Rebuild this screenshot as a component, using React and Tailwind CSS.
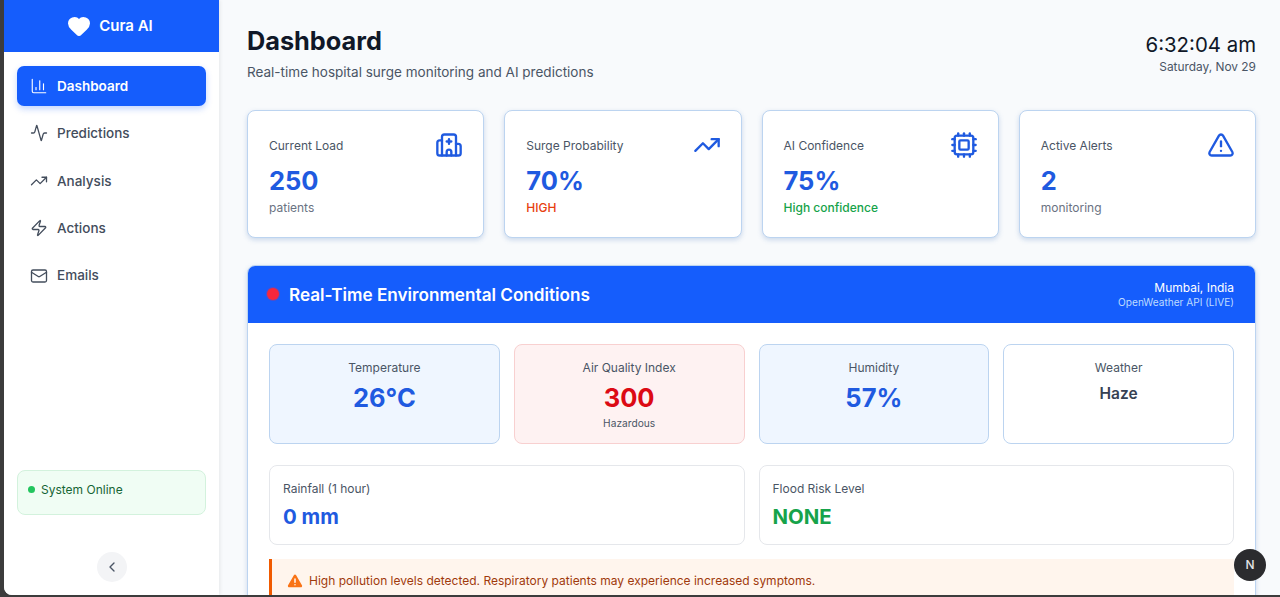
import { Activity, ChartColumn, ChevronLeft, Cpu, Heart, Hospital, Mail, TrendingUp, TriangleAlert, Zap } from "lucide-react";

const navItems = [
  { label: "Dashboard", icon: ChartColumn, active: true },
  { label: "Predictions", icon: Activity },
  { label: "Analysis", icon: TrendingUp },
  { label: "Actions", icon: Zap },
  { label: "Emails", icon: Mail },
];

const stats = [
  { label: "Current Load", value: "250", note: "patients", noteClass: "text-[#6a7282]", icon: Hospital },
  { label: "Surge Probability", value: "70%", note: "HIGH", noteClass: "text-[#e7400f] font-medium", icon: TrendingUp },
  { label: "AI Confidence", value: "75%", note: "High confidence", noteClass: "text-[#16a34a] font-medium", icon: Cpu },
  { label: "Active Alerts", value: "2", note: "monitoring", noteClass: "text-[#6a7282]", icon: TriangleAlert },
];

const StatCard = ({ stat }) => {
  const Icon = stat.icon;
  return (
    <div className="h-[128px] rounded-[8px] border border-[#bcd4f0] bg-white px-[21px] pt-[25px] shadow-[0_2px_5px_rgba(100,140,200,0.3)]">
      <div className="flex items-start justify-between">
        <div>
          <p className="text-[12px] leading-[19px] text-[#4a5565]">{stat.label}</p>
          <p className="mt-[10px] text-[25.5px] leading-[32px] font-bold text-[#1f5ae0]">{stat.value}</p>
          <p className={`mt-[2px] text-[12px] leading-[18px] ${stat.noteClass}`}>{stat.note}</p>
        </div>
        <Icon className="mt-[-5px] mr-[-1px] h-[28px] w-[28px] text-[#1f5ae0]" strokeWidth={2} />
      </div>
    </div>
  );
};

const EnvCard = ({ label, value, valueClass, boxClass, sub }) => (
  <div className={`h-[100px] rounded-[8px] border pt-[14px] text-center ${boxClass}`}>
    <p className="text-[12px] leading-[18px] text-[#4a5565]">{label}</p>
    <p className={`mt-[4px] ${valueClass}`}>{value}</p>
    {sub && <p className="mt-[1px] text-[10.2px] leading-[14px] text-[#4a5565]">{sub}</p>}
  </div>
);

const WideCard = ({ label, value, valueClass }) => (
  <div className="h-[80px] rounded-[8px] border border-[#e5e7eb] bg-white px-[13px] pt-[14px]">
    <p className="text-[12px] leading-[18px] text-[#4a5565]">{label}</p>
    <p className={`mt-[5px] text-[20.4px] leading-[28px] font-bold ${valueClass}`}>{value}</p>
  </div>
);

export default function App() {
  return (
    <div className="relative h-[597px] w-[1280px] overflow-hidden bg-[#3c3c3c] pb-[2px] pl-[4px] font-['Inter',sans-serif]">
      <div className="flex h-full overflow-hidden rounded-bl-[8px] bg-[#f8fafc]">
        <aside className="flex h-full w-[215px] shrink-0 flex-col bg-white shadow-[1px_0_4px_rgba(0,0,0,0.08)]">
          <div className="flex h-[52px] items-center justify-center gap-[8px] bg-[#155dfc] pr-[1px] text-white">
            <Heart className="ml-[-2px] h-[24px] w-[24px] fill-white" strokeWidth={2} />
            <span className="text-[15px] font-semibold">Cura AI</span>
          </div>
          <nav className="flex flex-col gap-[7.4px] px-[13px] pt-[14px]">
            {navItems.map((item) => {
              const Icon = item.icon;
              return (
                <div
                  key={item.label}
                  className={`flex h-[40px] items-center gap-[9px] rounded-[7px] px-[13px] text-[13.5px] ${
                    item.active
                      ? "bg-[#155dfc] font-semibold text-white shadow-[0_3px_6px_rgba(21,93,252,0.25)]"
                      : "font-medium text-[#434d5c]"
                  }`}
                >
                  <Icon className="h-[18px] w-[18px]" strokeWidth={item.active ? 1.5 : 1.75} />
                  <span>{item.label}</span>
                </div>
              );
            })}
          </nav>
          <div className="mx-[13px] mt-auto flex h-[45px] items-start gap-[6px] rounded-[8px] border border-[#d3f2dd] bg-[#f0fdf4] px-[10px] pt-[10px]">
            <span className="mt-[5px] h-[7px] w-[7px] rounded-full bg-[#22c55e]" />
            <span className="text-[12px] leading-[17px] text-[#166534]">System Online</span>
          </div>
          <div className="flex justify-center pt-[37px] pb-[13px]">
            <div className="flex h-[30px] w-[30px] items-center justify-center rounded-full bg-[#f3f4f6] text-[#4a5565]">
              <ChevronLeft className="h-[16px] w-[16px]" />
            </div>
          </div>
        </aside>

        <main className="min-w-0 flex-1 overflow-hidden pt-[24px] pr-[24px] pl-[28px]">
          <header className="flex items-start justify-between">
            <div>
              <h1 className="text-[25.3px] leading-[33px] font-bold text-[#101828]">Dashboard</h1>
              <p className="mt-[6px] text-[13.52px] leading-[18px] text-[#4a5565]">
                Real-time hospital surge monitoring and AI predictions
              </p>
            </div>
            <div className="pt-[8px] text-right">
              <p className="text-[20.4px] leading-[26px] text-[#101828]">6:32:04 am</p>
              <p className="mt-[1px] text-[11.9px] leading-[16px] text-[#4a5565]">Saturday, Nov 29</p>
            </div>
          </header>

          <section className="mt-[29px] grid grid-cols-4 gap-[20px]">
            {stats.map((stat) => (
              <StatCard key={stat.label} stat={stat} />
            ))}
          </section>

          <section className="mt-[27px] overflow-hidden rounded-[8px] border border-[#bcd4f0] bg-white shadow-[0_2px_5px_rgba(100,140,200,0.3)]">
            <div className="flex h-[57px] items-center justify-between bg-[#155dfc] pr-[21px] pl-[19px] text-white">
              <div className="flex items-center gap-[10px]">
                <span className="h-[12px] w-[12px] rounded-full bg-[#f8273c] shadow-[0_0_0_1px_rgba(248,39,60,0.3)]" />
                <span className="text-[17.15px] font-semibold">Real-Time Environmental Conditions</span>
              </div>
              <div className="text-right">
                <p className="text-[12px] leading-[15px]">Mumbai, India</p>
                <p className="text-[10.1px] leading-[14px] text-[#bedbff]">OpenWeather API (LIVE)</p>
              </div>
            </div>
            <div className="px-[21px] pt-[21px]">
              <div className="grid grid-cols-4 gap-[14px]">
                <EnvCard
                  label="Temperature"
                  value="26°C"
                  boxClass="border-[#bcd4f0] bg-[#eff6ff]"
                  valueClass="text-[25.5px] leading-[34px] font-bold text-[#1f5ae0]"
                />
                <EnvCard
                  label="Air Quality Index"
                  value="300"
                  sub="Hazardous"
                  boxClass="border-[#f8d0d0] bg-[#fef2f2]"
                  valueClass="text-[25.5px] leading-[34px] font-bold text-[#dc0a14]"
                />
                <EnvCard
                  label="Humidity"
                  value="57%"
                  boxClass="border-[#bcd4f0] bg-[#eff6ff]"
                  valueClass="text-[25.5px] leading-[34px] font-bold text-[#1f5ae0]"
                />
                <EnvCard
                  label="Weather"
                  value="Haze"
                  boxClass="border-[#bcd4f0] bg-white"
                  valueClass="text-[15.5px] leading-[26px] font-semibold text-[#364153]"
                />
              </div>
              <div className="mt-[21px] grid grid-cols-2 gap-[14px]">
                <WideCard label="Rainfall (1 hour)" value="0 mm" valueClass="text-[#1f5ae0]" />
                <WideCard label="Flood Risk Level" value="NONE" valueClass="text-[#16a34a]" />
              </div>
              <div className="mt-[14px] flex h-[60px] items-start gap-[6px] border-l-[3px] border-[#f05a00] bg-[#fff5ed] pt-[13px] pl-[15px]">
                <svg viewBox="0 0 24 24" className="mt-[1px] h-[16px] w-[16px] text-[#f97316]">
                  <path
                    fill="currentColor"
                    d="M10.3 3.2 1.6 18.5A2 2 0 0 0 3.3 21.5h17.4a2 2 0 0 0 1.7-3L13.7 3.2a2 2 0 0 0-3.4 0Z"
                  />
                  <path stroke="white" strokeWidth="2.2" strokeLinecap="round" d="M12 9v5M12 17.5v.1" />
                </svg>
                <p className="text-[12px] leading-[18px] text-[#9f3a0c]">
                  High pollution levels detected. Respiratory patients may experience increased symptoms.
                </p>
              </div>
            </div>
          </section>
        </main>
      </div>

      <div className="absolute top-[549px] left-[1234px] flex h-[32px] w-[32px] items-center justify-center rounded-full bg-[#2b2b2e] text-[12px] font-medium text-[#e5e5e5]">
        N
      </div>
    </div>
  );
}
